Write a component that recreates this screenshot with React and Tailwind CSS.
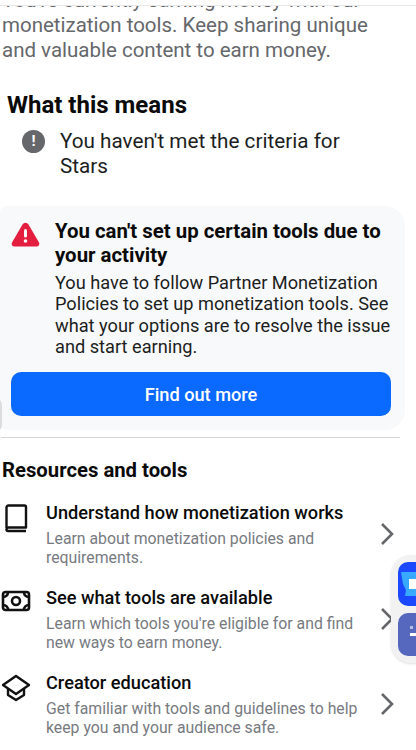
import React from "react";

const Chevron = () => (
  <svg className="w-[16px] h-[26px] shrink-0" viewBox="0 0 16 26" fill="none" stroke="#65676b" strokeWidth="2.6">
    <path d="M3 3l10 10-10 10" />
  </svg>
);

const BookIcon = () => (
  <svg className="ml-[4px]" width="24" height="29" viewBox="0 0 24 29" fill="none" stroke="#111" strokeWidth="2.4" strokeLinejoin="round">
    <path d="M2.500 24V3.500A2 2 0 0 1 4.500 1.500h16A1.500 1.500 0 0 1 22 3v20.500H4.500a2 2 0 0 0-2 2v0a1.500 1.500 0 0 0 1.500 1.500H22" />
  </svg>
);

const MoneyIcon = () => (
  <svg className="ml-[1px]" width="30" height="24" viewBox="0 0 30 24" fill="none" stroke="#111" strokeWidth="2.6">
    <rect x="2" y="3" width="26" height="18" rx="2.500" />
    <circle cx="15" cy="12" r="4" />
    <path d="M2 8c3 0 5-2 5-5M28 8c-3 0-5-2-5-5M2 16c3 0 5 2 5 5M28 16c-3 0-5 2-5 5" />
  </svg>
);

const CapIcon = () => (
  <svg className="ml-[1px]" width="30" height="28" viewBox="0 0 30 28" fill="none" stroke="#111" strokeWidth="2.4" strokeLinejoin="round">
    <path d="M15 2L28 11 15 20 2 11z" />
    <path d="M7 15v6l8 5 8-5v-6" />
  </svg>
);

const rows = [
  {
    icon: <BookIcon />,
    title: "Understand how monetization works",
    text: "Learn about monetization policies and requirements.",
  },
  {
    icon: <MoneyIcon />,
    title: "See what tools are available",
    text: "Learn which tools you're eligible for and find new ways to earn money.",
  },
  {
    icon: <CapIcon />,
    title: "Creator education",
    text: "Get familiar with tools and guidelines to help keep you and your audience safe.",
  },
];

const App = () => {
  return (
    <div className="relative w-[416px] h-[750px] overflow-hidden bg-white font-['Roboto',sans-serif]">
      <div className="h-[6px] border-b border-[#e8e8e8] bg-white relative z-10" />
      <div className="h-[744px] overflow-hidden">
        <div className="-mt-[18px]">
          <p className="pl-[2px] pr-[30px] text-[20.500px] leading-[25px] text-[#65676b]">
            You're currently earning money with our monetization tools. Keep sharing unique and valuable content to earn money.
          </p>

          <h2 className="mt-[28px] pl-[7px] text-[24px] leading-[28px] font-bold text-[#0b0b0b]">What this means</h2>
          <div className="mt-[10px] flex pl-[22px]">
            <div className="mt-[1px] w-[23px] h-[23px] rounded-full bg-[#65676b] text-white text-[15px] leading-[23px] font-bold text-center shrink-0">!</div>
            <p className="ml-[15px] w-[300px] text-[20.700px] leading-[25px] text-[#1c1e21]">You haven't met the criteria for Stars</p>
          </div>

          <div className="relative mt-[27px] w-[405px] rounded-r-[20px] rounded-l-[8px] bg-[#f8f9fb] pt-[13px] pb-[14px] pl-[11px] pr-[8px]">
            <div className="flex">
              <svg className="mt-[3px] shrink-0" width="29" height="25" viewBox="0 0 29 25">
                <path d="M11.500 2.500a3.500 3.500 0 0 1 6 0l10.500 18a2.800 2.800 0 0 1-2.500 4H3.500a2.800 2.800 0 0 1-2.500-4z" fill="#e41e3f" />
                <rect x="13" y="7" width="3" height="8.500" rx="1.500" fill="#fff" />
                <circle cx="14.500" cy="19" r="1.800" fill="#fff" />
              </svg>
              <div className="ml-[15px]">
                <h3 className="pr-[7px] text-[20.400px] leading-[24px] font-bold text-[#0b0b0b]">You can't set up certain tools due to your activity</h3>
                <p className="mt-[5px] text-[18.200px] leading-[21.300px] text-[#1c1e21]">
                  You have to follow Partner Monetization Policies to set up monetization tools. See what your options are to resolve the issue and start earning.
                </p>
              </div>
            </div>
            <button className="mt-[15px] w-[380px] h-[44px] rounded-[10px] bg-[#0a69ff] text-white text-[18.200px] font-medium">Find out more</button>
            <div className="absolute -left-[12px] top-[192px] w-[14px] h-[34px] rounded-full bg-[#dcdcdc]" />
          </div>

          <div className="mt-[7px] ml-[1px] w-[399px] border-t border-[#d4d4d4]" />

          <h2 className="mt-[19px] pl-[2px] text-[20.300px] leading-[26px] font-bold text-[#0b0b0b]">Resources and tools</h2>

          <div className="mt-[18px] flex flex-col gap-[19px]">
            {rows.map((row) => (
              <div key={row.title} className="flex items-center pr-[21px]">
                <div className="w-[46px] self-start mt-[3px] shrink-0">{row.icon}</div>
                <div className="flex-1">
                  <div className="text-[18.200px] leading-[24px] font-medium text-[#0b0b0b]">{row.title}</div>
                  <p className="mt-[4px] w-[318px] text-[15.800px] leading-[19px] text-[#777a7f]">{row.text}</p>
                </div>
                <Chevron />
              </div>
            ))}
          </div>
        </div>
      </div>

      <div className="absolute left-[391px] top-[555px] w-[40px] h-[108px] rounded-l-[20px] bg-[#f2f2f2] shadow-sm flex flex-col items-start pl-[7px] gap-[7px] py-[7px]">
        <div className="relative w-[18px] h-[44px] rounded-l-[10px] bg-[#1b48ff] overflow-hidden">
          <svg className="absolute left-[3px] top-[8px]" width="15" height="28" viewBox="0 0 15 28">
            <path d="M0 2h15v24H4l1-6-3-6z" fill="#39a9ff" />
            <rect x="8" y="9" width="7" height="10" fill="#fff" />
          </svg>
        </div>
        <div className="relative w-[18px] h-[44px] rounded-l-[10px] bg-[#5568bd]">
          <div className="absolute right-0 top-[20px] w-[6px] h-[3px] bg-white" />
          <div className="absolute right-[3px] top-[13px] w-[3px] h-[3px] bg-[#b5bde3]" />
        </div>
      </div>
    </div>
  );
};

export default App;
